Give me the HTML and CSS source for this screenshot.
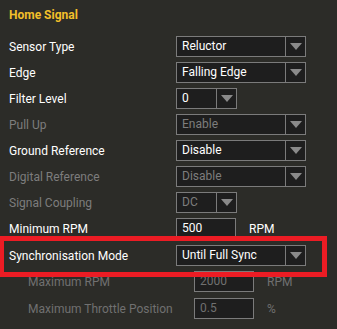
FILE: index.html
```html
<!DOCTYPE html>
<html>
<head>
<meta charset="utf-8">
<link rel="stylesheet" href="styles.css">
</head>
<body>
<div class="panel">
  <div class="title">Home Signal</div>
  <div class="rows">
    <div class="row"><span class="label">Sensor Type</span><div class="combo wide"><span class="val">Reluctor</span><span class="arrow"><i></i></span></div></div>
    <div class="row"><span class="label">Edge</span><div class="combo wide"><span class="val">Falling Edge</span><span class="arrow"><i></i></span></div></div>
    <div class="row"><span class="label">Filter Level</span><div class="combo narrow"><span class="val">0</span><span class="arrow"><i></i></span></div></div>
    <div class="row off"><span class="label">Pull Up</span><div class="combo wide"><span class="val">Enable</span><span class="arrow"><i></i></span></div></div>
    <div class="row"><span class="label">Ground Reference</span><div class="combo wide"><span class="val">Disable</span><span class="arrow"><i></i></span></div></div>
    <div class="row off"><span class="label">Digital Reference</span><div class="combo wide"><span class="val">Disable</span><span class="arrow"><i></i></span></div></div>
    <div class="row off"><span class="label">Signal Coupling</span><div class="combo narrow"><span class="val">DC</span><span class="arrow"><i></i></span></div></div>
    <div class="row"><span class="label">Minimum RPM</span><div class="field"><span class="val">500</span></div><span class="unit">RPM</span></div>
    <div class="row sync"><span class="label">Synchronisation Mode</span><div class="combo wide"><span class="val">Until Full Sync</span><span class="arrow"><i></i></span></div></div>
    <div class="row off sub"><span class="label">Maximum RPM</span><div class="field"><span class="val">2000</span></div><span class="unit">RPM</span></div>
    <div class="row off sub"><span class="label">Maximum Throttle Position</span><div class="field"><span class="val">0.5</span></div><span class="unit">%</span></div>
  </div>
  <div class="highlight"></div>
</div>
</body>
</html>
```

FILE: styles.css
```css
html, body {
  margin: 0;
  padding: 0;
  background: #2c2c28;
  width: 337px;
  height: 329px;
  overflow: hidden;
}
.panel {
  position: relative;
  width: 337px;
  height: 329px;
  font-family: Roboto, "Open Sans", sans-serif;
  font-size: 12px;
  color: #ffffff;
  box-sizing: border-box;
  padding: 7px 0 0 9px;
}
.title {
  height: 16px;
  line-height: 16px;
  font-weight: 700;
  color: #f2bf2a;
  margin-bottom: 13px;
}
.rows {
  display: flex;
  flex-direction: column;
  gap: 5px;
}
.row {
  display: grid;
  grid-template-columns: 167px auto 1fr;
  align-items: center;
  height: 21px;
}
.row.sync { margin-top: 1px; }
.row.sub { grid-template-columns: 166px auto 1fr; padding-left: 19px; }
.row.sub:last-child { margin-top: 1px; }
.label { line-height: 16px; white-space: nowrap; }
.off .label, .off .val, .off .unit { color: #7d7d7d; }
.sub .label, .sub .val, .sub .unit { color: #707070; }
.combo, .field {
  display: flex;
  box-sizing: border-box;
  height: 21px;
  border: 1px solid #7b7b7b;
  background: #1e1e1e;
}
.combo.wide { width: 130px; }
.combo.narrow { width: 61px; }
.field { width: 60px; }
.val {
  flex: 1;
  line-height: 19px;
  padding-left: 5px;
  white-space: nowrap;
  overflow: hidden;
}
.arrow {
  width: 19px;
  border-left: 1px solid #7b7b7b;
  display: flex;
  align-items: center;
  justify-content: center;
}
.arrow i {
  display: block;
  width: 0;
  height: 0;
  border-left: 6px solid transparent;
  border-right: 6px solid transparent;
  border-top: 7px solid #8a8a8a;
}
.unit { padding-left: 13px; line-height: 16px; }
.highlight {
  position: absolute;
  left: -1px;
  top: 236px;
  width: 328px;
  height: 41px;
  box-sizing: border-box;
  border: 5px solid #ec1c24;
}
```
